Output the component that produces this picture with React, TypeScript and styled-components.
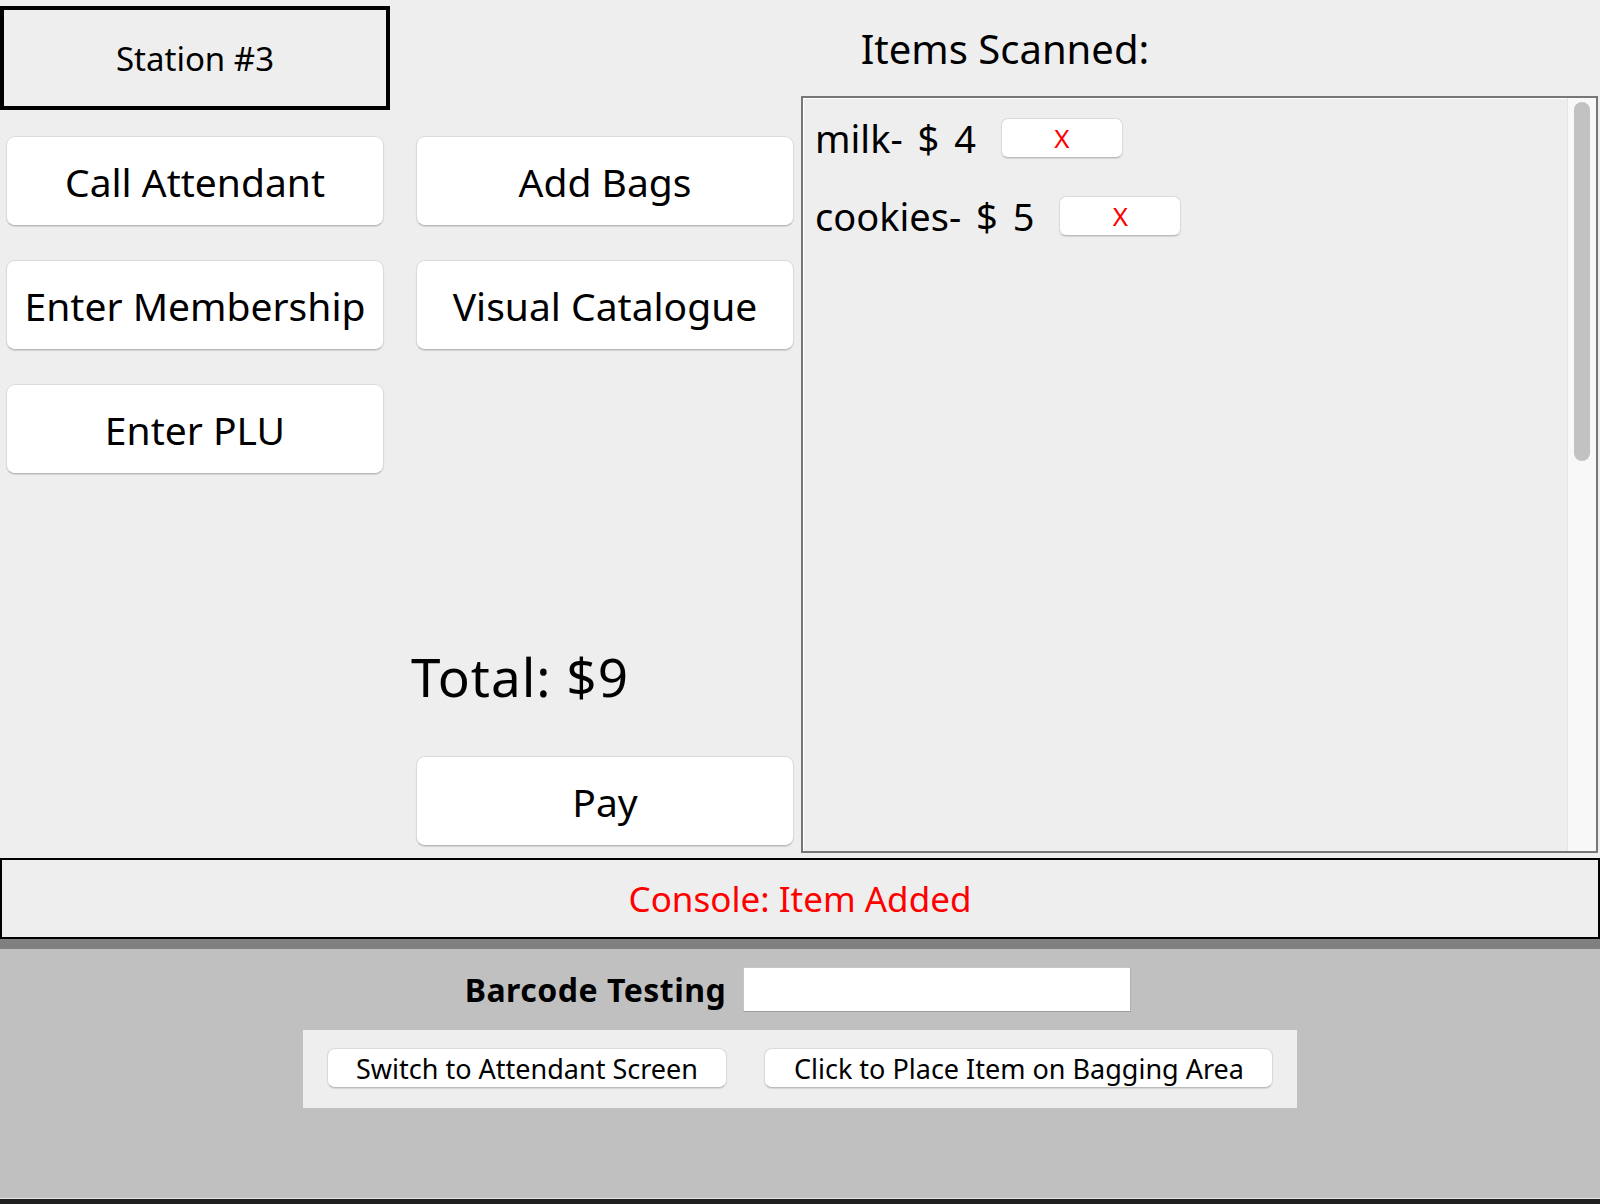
import React from "react";
import styled, { createGlobalStyle } from "styled-components";

const GlobalStyle = createGlobalStyle`
  html, body { margin: 0; padding: 0; }
  body {
    width: 1600px;
    height: 1204px;
    overflow: hidden;
    background: #c0c0c0;
    font-family: "Noto Sans", "DejaVu Sans", sans-serif;
    color: #000;
  }
  * { box-sizing: border-box; }
`;

const Frame = styled.div`
  width: 1600px;
  height: 1204px;
  display: flex;
  flex-direction: column;
`;

const Top = styled.div`
  height: 858px;
  display: flex;
  background: #eeeeee;
`;

const LeftCol = styled.div`
  width: 390px;
  display: flex;
  flex-direction: column;
`;

const StationBox = styled.div`
  margin-top: 6px;
  height: 104px;
  border: 4px solid #000;
  display: flex;
  align-items: center;
  justify-content: center;
  font-size: 33px;
`;

const ButtonStack = styled.div`
  margin-top: 26px;
  padding-left: 6px;
  display: flex;
  flex-direction: column;
  gap: 34px;
`;

const BigButton = styled.button`
  width: 378px;
  height: 90px;
  background: #fff;
  border: 1px solid #dadada;
  border-bottom-color: #b9b9b9;
  border-radius: 9px;
  box-shadow: 0 1px 1px rgba(0, 0, 0, 0.12);
  font-family: "Noto Sans", "DejaVu Sans", sans-serif;
  font-size: 39px;
  color: #000;
  padding: 0;
  display: flex;
  align-items: center;
  justify-content: center;
`;

const Main = styled.div`
  flex: 1;
  display: flex;
  flex-direction: column;
`;

const Title = styled.div`
  height: 96px;
  padding-left: 20px;
  display: flex;
  align-items: center;
  justify-content: center;
  font-size: 40px;
`;

const Body = styled.div`
  flex: 1;
  display: flex;
`;

const MidCol = styled.div`
  margin-left: 26px;
  width: 378px;
  padding-top: 40px;
  padding-bottom: 12px;
  display: flex;
  flex-direction: column;
  gap: 34px;
`;

const Total = styled.div`
  margin-top: auto;
  margin-left: -5px;
  margin-bottom: 9px;
  font-size: 53px;
  letter-spacing: 1px;
`;

const ItemsPanel = styled.div`
  margin-left: 7px;
  width: 797px;
  margin-bottom: 5px;
  border: 2px solid #777777;
  box-shadow: inset 1px 1px 0 #ffffff;
  background: #eeeeee;
  display: flex;
`;

const ItemList = styled.div`
  flex: 1;
  padding: 20px 0 0 12px;
  display: flex;
  flex-direction: column;
  gap: 38px;
`;

const ItemRow = styled.div`
  display: flex;
  align-items: center;
  gap: 25px;
  height: 40px;
`;

const ItemName = styled.span`
  font-size: 38px;
  line-height: 40px;
  word-spacing: 5px;
  white-space: pre;
`;

const RemoveButton = styled.button`
  width: 122px;
  height: 40px;
  background: #fff;
  border: 1px solid #dadada;
  border-bottom-color: #bcbcbc;
  border-radius: 7px;
  box-shadow: 0 1px 1px rgba(0, 0, 0, 0.1);
  font-family: "Noto Sans", "DejaVu Sans", sans-serif;
  font-size: 26px;
  color: #ff0000;
  padding: 0;
  display: flex;
  align-items: center;
  justify-content: center;
`;

const ScrollTrack = styled.div`
  width: 29px;
  background: #f8f8f8;
  border-left: 1px solid #e4e4e4;
  padding: 4px 6px 0 6px;
`;

const ScrollThumb = styled.div`
  width: 16px;
  height: 359px;
  border-radius: 8px;
  background: #c2c2c2;
`;

const Console = styled.div`
  height: 81px;
  border: 2px solid #000;
  background: #eeeeee;
  display: flex;
  align-items: center;
  justify-content: center;
  color: #ff0000;
  font-size: 35px;
`;

const Divider = styled.div`
  height: 10px;
  background: #808080;
`;

const Bottom = styled.div`
  flex: 1;
  background: #c0c0c0;
  padding-top: 18px;
  display: flex;
  flex-direction: column;
  align-items: center;
`;

const BarcodeRow = styled.div`
  display: flex;
  align-items: center;
  gap: 17px;
  margin-right: 4px;
`;

const BarcodeLabel = styled.label`
  font-size: 32px;
  font-weight: 700;
  letter-spacing: 0.5px;
`;

const BarcodeInput = styled.input`
  width: 388px;
  height: 45px;
  background: #fff;
  border: 1px solid #c6c6c6;
  border-bottom-color: #9c9c9c;
  border-right-color: #b0b0b0;
  outline: none;
  padding: 0 6px;
  font-family: "Noto Sans", "DejaVu Sans", sans-serif;
  font-size: 24px;
`;

const TestPanel = styled.div`
  margin-top: 18px;
  background: #eeeeee;
  padding: 18px 24px 20px;
  display: flex;
  gap: 37px;
`;

const SmallButton = styled.button`
  height: 40px;
  padding: 0 28.5px;
  background: #fff;
  border: 1px solid #dadada;
  border-bottom-color: #bcbcbc;
  border-radius: 8px;
  box-shadow: 0 1px 1px rgba(0, 0, 0, 0.1);
  font-family: "Noto Sans", "DejaVu Sans", sans-serif;
  font-size: 27px;
  color: #000;
  white-space: nowrap;
  display: flex;
  align-items: center;
`;

const Taskbar = styled.div`
  height: 6px;
  border-top: 1px solid #e2e2e2;
  background: #1f1f1f;
`;

const items = [
  { name: "milk", price: 4 },
  { name: "cookies", price: 5 },
];

export default function App() {
  const total = items.reduce((s, i) => s + i.price, 0);
  return (
    <>
      <GlobalStyle />
      <Frame>
        <Top>
          <LeftCol>
            <StationBox>Station #3</StationBox>
            <ButtonStack>
              <BigButton>Call Attendant</BigButton>
              <BigButton>Enter Membership</BigButton>
              <BigButton>Enter PLU</BigButton>
            </ButtonStack>
          </LeftCol>
          <Main>
            <Title>Items Scanned:</Title>
            <Body>
              <MidCol>
                <BigButton>Add Bags</BigButton>
                <BigButton>Visual Catalogue</BigButton>
                <Total>Total: ${total}</Total>
                <BigButton>Pay</BigButton>
              </MidCol>
              <ItemsPanel>
                <ItemList>
                  {items.map((it) => (
                    <ItemRow key={it.name}>
                      <ItemName>{`${it.name}- $ ${it.price}`}</ItemName>
                      <RemoveButton>X</RemoveButton>
                    </ItemRow>
                  ))}
                </ItemList>
                <ScrollTrack>
                  <ScrollThumb />
                </ScrollTrack>
              </ItemsPanel>
            </Body>
          </Main>
        </Top>
        <Console>Console: Item Added</Console>
        <Divider />
        <Bottom>
          <BarcodeRow>
            <BarcodeLabel>Barcode Testing</BarcodeLabel>
            <BarcodeInput type="text" />
          </BarcodeRow>
          <TestPanel>
            <SmallButton>Switch to Attendant Screen</SmallButton>
            <SmallButton>Click to Place Item on Bagging Area</SmallButton>
          </TestPanel>
        </Bottom>
        <Taskbar />
      </Frame>
    </>
  );
}
